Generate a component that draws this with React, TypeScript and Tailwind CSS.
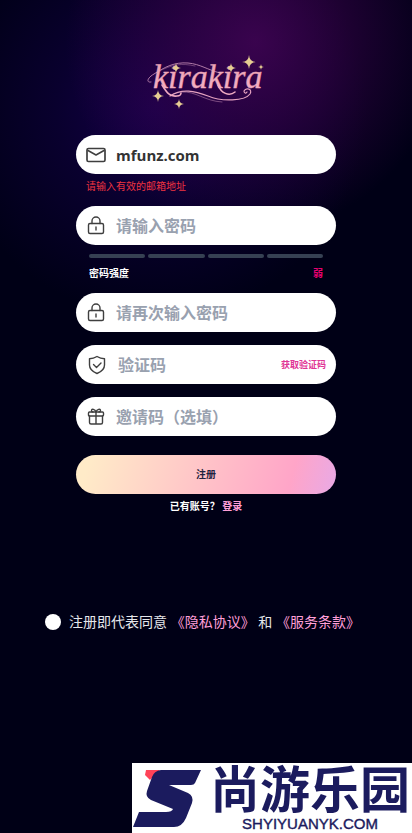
import React, { useState } from "react";

const Sparkle = ({ x, y, r }: { x: number; y: number; r: number }) => (
  <path
    transform={`translate(${x} ${y}) scale(${r})`}
    d="M0-1Q.06-.06 1 0Q.06 .06 0 1Q-.06 .06-1 0Q-.06-.06 0-1Z"
    fill="#e6cd92"
  />
);

const Logo = () => (
  <svg width="124" height="60" viewBox="144 52 124 60" role="img" aria-label="kirakira">
    <defs>
      <linearGradient id="logo-pink" x1="0" y1="0" x2="0" y2="1">
        <stop offset="0" stopColor="#e9a0ae" />
        <stop offset="1" stopColor="#f8b2c8" />
      </linearGradient>
    </defs>
    <g fill="none" stroke="#b07aa6" strokeLinecap="round">
      <path d="M151 82c-5 1-4-4 3-8c11-7 20-12 34-11c12 1 20 7 32 10" strokeWidth="1" />
      <path d="M158 72c14-8 24-9 37-6" strokeWidth=".5" />
      <path
        d="M170 96c12-8 25-5 38 0c14 6 37 5 42-2c3-5-4-7-6-3c0 2 2 3 3 1"
        stroke="#e5a2c0"
        strokeWidth="1.2"
      />
      <path d="M182 92c14-1 22 9 40 10" strokeWidth=".6" />
      <path d="M162 85c5 8 8 12 15 11c3 0 4-2 4-3" stroke="#f0aac2" strokeWidth="1.6" />
      <path d="M218 85c3 8 11 12 17 7" stroke="#f0aac2" strokeWidth="1.6" />
    </g>
    <text
      x="153"
      y="88"
      fontSize="34"
      fontStyle="italic"
      fontFamily="'Liberation Serif', serif"
      fill="url(#logo-pink)"
      stroke="#eda7ba"
      strokeWidth=".4"
    >
      kirakira
    </text>
    <Sparkle x={249} y={62} r={7} />
    <Sparkle x={261} y={67} r={3} />
    <Sparkle x={231} y={68} r={5} />
    <Sparkle x={176} y={68} r={5} />
    <Sparkle x={158} y={96} r={6} />
    <Sparkle x={179} y={104} r={5} />
  </svg>
);

const iconProps = {
  height: 20,
  viewBox: "0 0 20 20",
  fill: "none",
  stroke: "#3f3f3f",
  strokeWidth: 1.4,
  strokeLinecap: "round" as const,
  strokeLinejoin: "round" as const,
  "aria-hidden": true,
};

const MailIcon = () => (
  <svg width="20" {...iconProps}>
    <rect x="1" y="3.5" width="18" height="13" rx="1.5" strokeWidth="1.7" />
    <path d="M2 5.500l8 4.500L18 5.500" strokeWidth="1.5" />
  </svg>
);

const LockIcon = () => (
  <svg width="20" {...iconProps}>
    <rect x="2.5" y="7.5" width="15" height="10" rx="1.5" />
    <path d="M6 7.500V5a4 4 0 0 1 8 0V7.500M10 11v3" />
  </svg>
);

const ShieldIcon = () => (
  <svg width="22" {...iconProps}>
    <path d="M10 1.500c2.500 1.500 4.800 2.200 7.500 2.300V10c0 4-3 6.700-7.500 8.500C5.500 16.700 2.500 14 2.500 10V3.800C5.200 3.700 7.500 3 10 1.500Z" />
    <path d="M6.500 9.500l3 3 4.500-4.500" />
  </svg>
);

const GiftIcon = () => (
  <svg width="20" {...iconProps}>
    <rect x="2.500" y="5" width="15" height="4" rx="1" />
    <path d="M3.500 9v6.500a1.500 1.500 0 0 0 1.500 1.500h10a1.500 1.500 0 0 0 1.500-1.500V9M10 5V17" />
    <path d="M10 5C9 2 5.500 1.500 5.500 3.500c0 1 .5 1.500 1.500 1.500M10 5C11 2 14.500 1.500 14.500 3.500c0 1-.5 1.500-1.500 1.500" />
  </svg>
);

type FieldProps = {
  id: string;
  label: string;
  icon: React.ReactNode;
  type?: string;
  defaultValue?: string;
  children?: React.ReactNode;
};

const Field = ({ id, label, icon, type = "text", defaultValue, children }: FieldProps) => (
  <div className="flex items-center h-[39px] rounded-full bg-white px-2.5 gap-2.5">
    <label htmlFor={id} className="shrink-0">
      {icon}
    </label>
    <input
      id={id}
      type={type}
      aria-label={label}
      placeholder={defaultValue ? undefined : label}
      defaultValue={defaultValue}
      className="min-w-0 flex-1 bg-transparent text-[15px] leading-6 font-bold text-[#333333] placeholder:text-gray-400 placeholder-shown:text-base outline-none"
    />
    {children}
  </div>
);

const Watermark = () => (
  <div className="mt-auto self-end flex w-[280px] h-[70px] bg-white text-[#1b1b5e]">
    <svg width="76" height="70" viewBox="0 0 76 70" className="shrink-0" aria-hidden="true">
      <path d="M14 7h14l-10 10-5-5Z" fill="#ff4358" />
      <path
        d="M29 7H69L63 20Q62 22 59 22H37L56 30Q62 33 60 40L54 55Q50 64 42 64H1L7 49H34Q40 49 41 46L19 37Q13 34 15 28L20 14Q22 8 29 7Z"
        fill="#1b1b5e"
      />
    </svg>
    <div className="flex flex-1 flex-col items-center whitespace-nowrap">
      <span className="text-[50px] leading-[52px] font-bold">尚游乐园</span>
      <span className="text-[15px] leading-[18px] font-['Liberation_Sans',sans-serif] [-webkit-text-stroke:0.4px_#1b1b5e]">
        SHYIYUANYK.COM
      </span>
    </div>
  </div>
);

export default function App() {
  const [agreed, setAgreed] = useState(false);

  return (
    <div className="min-h-screen flex flex-col items-center bg-[#000016] bg-[radial-gradient(circle_at_62%_5%,rgba(66,4,84,0.85)_0px,rgba(56,2,74,0.6)_80px,transparent_190px),radial-gradient(circle_at_38%_13%,rgba(28,0,92,0.75)_0px,rgba(18,0,70,0.5)_100px,transparent_210px)] font-['Open_Sans','Noto_Sans_CJK_SC',sans-serif]">
      <header className="pt-[52px]">
        <Logo />
      </header>

      <form className="w-[260px] mt-[23px]" onSubmit={(e) => e.preventDefault()}>
        <Field id="email" label="请输入邮箱" icon={<MailIcon />} defaultValue="mfunz.com" />
        <p className="px-2.5 pt-1 pb-3 text-[10px] leading-4 text-[#ef3340]">请输入有效的邮箱地址</p>

        <Field id="password" label="请输入密码" type="password" icon={<LockIcon />} />
        <div className="px-[13px] pt-[9px] pb-3">
          <div className="grid grid-cols-4 gap-[3px]">
            <span className="h-1 rounded-full bg-gray-700" />
            <span className="h-1 rounded-full bg-gray-700" />
            <span className="h-1 rounded-full bg-gray-700" />
            <span className="h-1 rounded-full bg-gray-700" />
          </div>
          <div className="flex justify-between pt-[7px] text-[10px] leading-4 font-bold">
            <span className="text-white">密码强度</span>
            <span className="text-[#e6006f]">弱</span>
          </div>
        </div>

        <div className="flex flex-col gap-[13px]">
          <Field id="confirm" label="请再次输入密码" type="password" icon={<LockIcon />} />
          <Field id="code" label="验证码" icon={<ShieldIcon />}>
            <button type="button" className="shrink-0 text-[9px] font-bold text-[#df3695]">
              获取验证码
            </button>
          </Field>
          <Field id="invite" label="邀请码（选填）" icon={<GiftIcon />} />
        </div>

        <button
          type="submit"
          className="mt-[19px] h-[39px] w-full rounded-full bg-[linear-gradient(105deg,#ffebc8_5%,#ffa5c8_82%,#e8a9e6_100%)] text-[10px] font-bold text-[#1f2340]"
        >
          注册
        </button>
        <p className="pt-1 text-center text-[10px] leading-4 font-bold text-white">
          已有账号？{" "}
          <a href="#login" className="text-[#ff9fd8]">
            登录
          </a>
        </p>
      </form>

      <div className="mt-[98px] mb-6 flex items-center gap-2 self-start pl-[45px] text-sm leading-5 text-gray-200">
        <input
          id="agree"
          type="checkbox"
          checked={agreed}
          onChange={(e) => setAgreed(e.target.checked)}
          className="appearance-none size-4 shrink-0 rounded-full bg-white checked:bg-pink-400"
        />
        <p className="whitespace-nowrap">
          <label htmlFor="agree">注册即代表同意</label>{" "}
          <a href="#privacy" className="text-[#ff9fd8]">
            《隐私协议》
          </a>{" "}
          和{" "}
          <a href="#terms" className="text-[#ff9fd8]">
            《服务条款》
          </a>
        </p>
      </div>

      <Watermark />
    </div>
  );
}
